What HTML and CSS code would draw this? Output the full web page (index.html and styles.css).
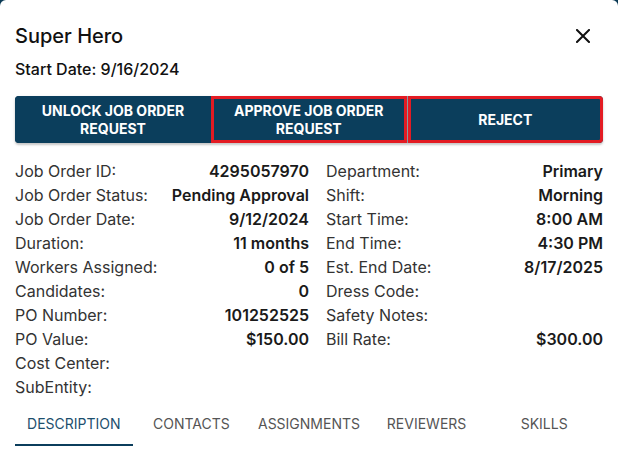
FILE: index.html
```html
<!DOCTYPE html>
<html>
<head>
<meta charset="utf-8">
<link rel="stylesheet" href="styles.css">
</head>
<body>
<div class="modal">
  <div class="header">
    <h1 class="title">Super Hero</h1>
    <button class="close" aria-label="close">
      <svg width="14" height="14" viewBox="0 0 14 14"><path d="M1 1L13 13M13 1L1 13" stroke="#111" stroke-width="2" stroke-linecap="square"/></svg>
    </button>
  </div>
  <div class="start">Start Date: 9/16/2024</div>
  <div class="btn-group">
    <button class="btn first">UNLOCK JOB ORDER<br>REQUEST</button>
    <button class="btn outlined">APPROVE JOB ORDER<br>REQUEST</button>
    <span class="divider"></span>
    <button class="btn outlined last">REJECT</button>
  </div>
  <div class="details">
    <div class="col">
      <div class="row"><span class="label">Job Order ID:</span><span class="value">4295057970</span></div>
      <div class="row"><span class="label">Job Order Status:</span><span class="value">Pending Approval</span></div>
      <div class="row"><span class="label">Job Order Date:</span><span class="value">9/12/2024</span></div>
      <div class="row"><span class="label">Duration:</span><span class="value">11 months</span></div>
      <div class="row"><span class="label">Workers Assigned:</span><span class="value">0 of 5</span></div>
      <div class="row"><span class="label">Candidates:</span><span class="value">0</span></div>
      <div class="row"><span class="label">PO Number:</span><span class="value">101252525</span></div>
      <div class="row"><span class="label">PO Value:</span><span class="value">$150.00</span></div>
      <div class="row"><span class="label">Cost Center:</span><span class="value"></span></div>
      <div class="row"><span class="label">SubEntity:</span><span class="value"></span></div>
    </div>
    <div class="col right">
      <div class="row"><span class="label">Department:</span><span class="value">Primary</span></div>
      <div class="row"><span class="label">Shift:</span><span class="value">Morning</span></div>
      <div class="row"><span class="label">Start Time:</span><span class="value">8:00 AM</span></div>
      <div class="row"><span class="label">End Time:</span><span class="value">4:30 PM</span></div>
      <div class="row"><span class="label">Est. End Date:</span><span class="value">8/17/2025</span></div>
      <div class="row"><span class="label">Dress Code:</span><span class="value"></span></div>
      <div class="row"><span class="label">Safety Notes:</span><span class="value"></span></div>
      <div class="row"><span class="label">Bill Rate:</span><span class="value">$300.00</span></div>
    </div>
  </div>
  <div class="tabs">
    <div class="tab active">DESCRIPTION</div>
    <div class="tab">CONTACTS</div>
    <div class="tab">ASSIGNMENTS</div>
    <div class="tab">REVIEWERS</div>
    <div class="tab">SKILLS</div>
  </div>
</div>
</body>
</html>
```
FILE: styles.css
```css
html, body {
  margin: 0;
  padding: 0;
  background: #0b3a55;
  height: 100%;
}
body {
  font-family: Inter, "Noto Sans", sans-serif;
  color: #222;
}
.modal {
  background: #fff;
  border-radius: 6px 6px 0 0;
  height: 455px;
  box-sizing: border-box;
  padding: 24px 15px 0 15px;
  overflow: hidden;
}
.header {
  display: flex;
  align-items: center;
  justify-content: space-between;
  height: 24px;
}
.title {
  margin: 0;
  font-size: 20px;
  font-weight: 500;
  color: #111;
  line-height: 24px;
}
.close {
  background: none;
  border: none;
  padding: 0;
  margin-right: 13px;
  width: 14px;
  height: 14px;
  display: flex;
}
.start {
  margin-top: 12px;
  font-size: 16px;
  font-weight: 500;
  color: #111;
  line-height: 18px;
}
.btn-group {
  margin-top: 18px;
  display: flex;
  height: 47px;
  border-radius: 4px;
  box-shadow: 0 2px 2px rgba(0,0,0,0.18), 0 1px 4px rgba(0,0,0,0.08);
  background: #0b3e5c;
}
.btn {
  flex: 1;
  background: #0b3e5c;
  color: #fff;
  border: none;
  font-family: Inter, "Noto Sans", sans-serif;
  font-weight: 700;
  font-size: 14px;
  line-height: 18px;
  padding: 1px 0 0 0;
  text-align: center;
}
.btn.first {
  border-radius: 4px 0 0 4px;
  flex: 0 0 196px;
}
.btn.outlined {
  border: 3px solid #e31b23;
  box-sizing: border-box;
}
.btn.last {
  border-radius: 0 4px 4px 0;
}
.divider {
  width: 1px;
  background: #8a98a3;
}
.details {
  margin-top: 16px;
  display: grid;
  grid-template-columns: 1fr 1fr;
}
.col {
  display: flex;
  flex-direction: column;
}
.col.right {
  padding-left: 17px;
}
.row {
  display: flex;
  justify-content: space-between;
  height: 24px;
  line-height: 24px;
  font-size: 16px;
}
.label {
  color: #333;
}
.value {
  font-weight: 600;
  color: #1a1a1a;
}
.tabs {
  margin-top: 3px;
  display: flex;
}
.tab {
  flex: 1;
  text-align: center;
  font-size: 14px;
  color: #555;
  height: 44px;
  line-height: 44px;
  box-sizing: border-box;
}
.tab.active {
  color: #1d4f6e;
  border-bottom: 2px solid #0b3e5c;
}
```
